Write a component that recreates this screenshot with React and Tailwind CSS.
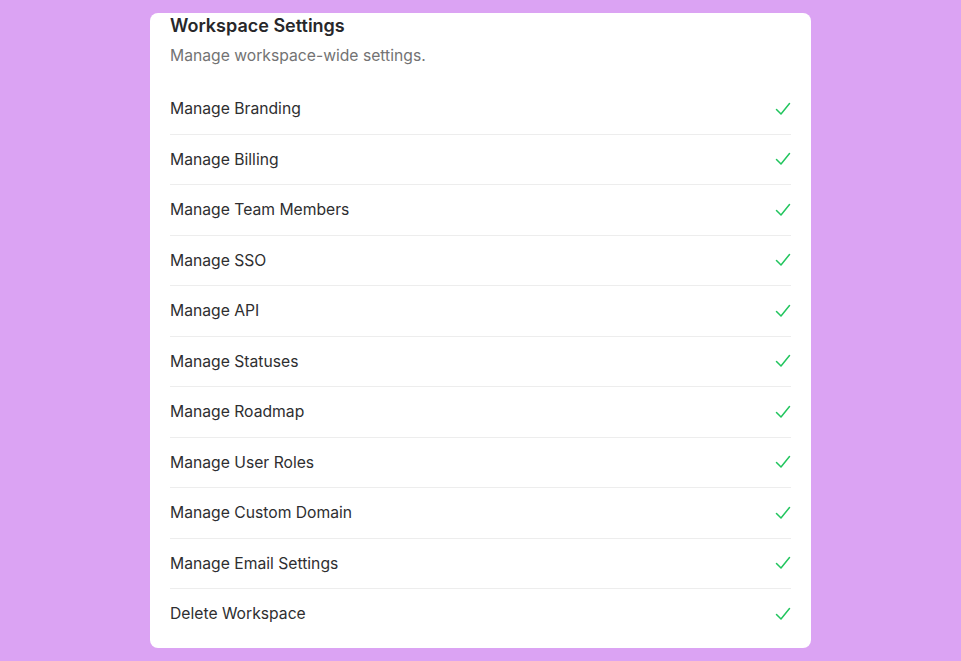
const permissions = [
  "Manage Branding",
  "Manage Billing",
  "Manage Team Members",
  "Manage SSO",
  "Manage API",
  "Manage Statuses",
  "Manage Roadmap",
  "Manage User Roles",
  "Manage Custom Domain",
  "Manage Email Settings",
  "Delete Workspace",
];

const CheckIcon = () => (
  <svg width="16" height="14" viewBox="0 0 16 14" fill="none" stroke="#22c55e" strokeWidth="1.5" strokeLinecap="round" strokeLinejoin="round">
    <path d="M1.5 7.5 L6 12 L14.5 1.5" />
  </svg>
);

const App = () => {
  return (
    <div className="min-h-screen bg-[#dba3f3] pt-[13px] font-['Inter',sans-serif]">
      <div className="ml-[150px] w-[661px] rounded-lg bg-white px-5 pt-px pb-[9px]">
        <h1 className="text-lg font-semibold leading-6 text-[#27272a]">Workspace Settings</h1>
        <p className="mt-[7px] text-[15.7px] leading-[22px] text-[#737373]">Manage workspace-wide settings.</p>

        <ul className="mt-[17px]">
          {permissions.map((name, i) => (
            <li
              key={name}
              className={`flex items-center justify-between py-[14px] ${i < permissions.length - 1 ? "border-b border-[#ededed]" : ""}`}
            >
              <span className="text-[15.7px] leading-[21.5px] text-[#2e2e30]">{name}</span>
              <CheckIcon />
            </li>
          ))}
        </ul>
      </div>
    </div>
  );
};

export default App;
